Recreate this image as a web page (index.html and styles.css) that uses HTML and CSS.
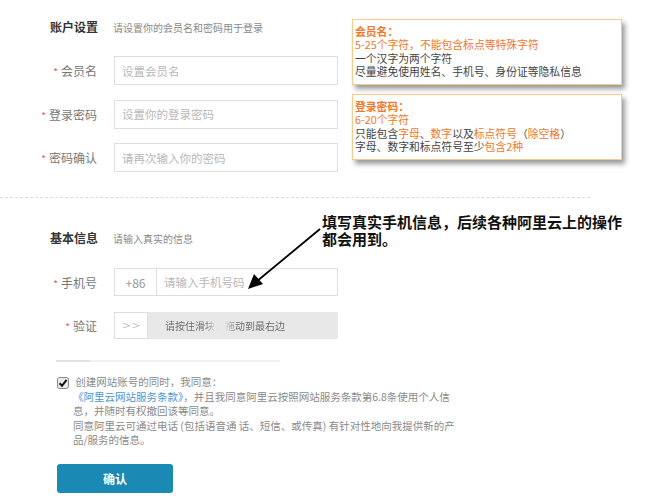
FILE: index.html
```html
<!DOCTYPE html>
<html lang="zh">
<head>
<meta charset="utf-8">
<link rel="stylesheet" href="styles.css">
</head>
<body>
<div class="page">
  <section class="sec sec-account">
    <div class="head"><h2>账户设置</h2><span class="sub">请设置你的会员名和密码用于登录</span></div>
    <div class="rows">
      <div class="row"><label><i>*</i>会员名</label><div class="input">设置会员名</div></div>
      <div class="row"><label><i>*</i>登录密码</label><div class="input">设置你的登录密码</div></div>
      <div class="row"><label><i>*</i>密码确认</label><div class="input">请再次输入你的密码</div></div>
    </div>
    <div class="tip tip-name">
      <b class="or">会员名：</b>
      <span class="or">5-25个字符，不能包含标点等特殊字符</span>
      <span>一个汉字为两个字符</span>
      <span>尽量避免使用姓名、手机号、身份证等隐私信息</span>
    </div>
    <div class="tip tip-pwd">
      <b class="or">登录密码：</b>
      <span class="or">6-20个字符</span>
      <span>只能包含<em>字母</em>、<em>数字</em>以及<em>标点符号</em>（<em>除空格</em>）</span>
      <span>字母、数字和标点符号至少<em>包含2种</em></span>
    </div>
  </section>

  <div class="dots"></div>

  <section class="sec sec-basic">
    <div class="head"><h2>基本信息</h2><span class="sub">请输入真实的信息</span></div>
    <div class="row phone"><label><i>*</i>手机号</label><div class="input split"><span class="code">+86</span><span class="ph">请输入手机号码</span></div></div>
    <div class="row verify"><label><i>*</i>验证</label><div class="slider"><span class="handle">&gt;&gt;</span><span class="slide-text">请按住滑块，拖动到最右边</span></div></div>
    <div class="note">填写真实手机信息，后续各种阿里云上的操作<br>都会用到。</div>
    <svg class="arrow" width="90" height="70" viewBox="0 0 90 70">
      <line x1="78" y1="4" x2="14" y2="57" stroke="#000" stroke-width="1.8"/>
      <polygon points="6,64 12,49 21,59" fill="#000"/>
    </svg>
  </section>

  <div class="rule"><span></span></div>

  <div class="agree">
    <svg class="check" width="12" height="12" viewBox="0 0 12 12">
      <rect x="0.5" y="0.5" width="11" height="11" rx="2" fill="#e9e9e9" stroke="#8a8a8a"/>
      <path d="M2.6 6.2 L5 8.8 L9.6 2.8" fill="none" stroke="#111" stroke-width="2"/>
    </svg>
    <p>&nbsp;创建网站账号的同时，我同意：<br><a>《阿里云网站服务条款》</a>，并且我同意阿里云按照网站服务条款第6.8条使用个人信<br>息，并随时有权撤回该等同意。<br>同意阿里云可通过电话 (包括语音通 话、短信、或传真) 有针对性地向我提供新的产<br>品/服务的信息。</p>
  </div>

  <button class="btn">确认</button>
</div>
</body>
</html>
```

FILE: styles.css
```css
* { box-sizing: border-box; }
html, body { margin: 0; padding: 0; background: #fff; }
body {
  width: 649px;
  height: 500px;
  overflow: hidden;
  font-family: "Noto Sans CJK SC", "Microsoft YaHei", sans-serif;
  color: #666;
}
.page { position: relative; padding-top: 17px; }
.sec { position: relative; }
.head {
  display: flex;
  align-items: center;
  height: 20px;
  padding-left: 50px;
}
.head h2 {
  margin: 0;
  width: 63px;
  font-size: 12px;
  font-weight: bold;
  color: #333;
  line-height: 20px;
}
.head .sub { font-size: 10px; color: #8a8a8a; }
.rows { display: flex; flex-direction: column; gap: 14.5px; margin-top: 19px; }
.row { display: flex; align-items: center; gap: 17px; }
.row label {
  width: 97px;
  text-align: right;
  font-size: 12px;
  color: #777;
}
.row label i { font-style: normal; color: #e0585c; margin-right: 3px; font-size: 10px; }
.input {
  width: 224px;
  height: 29px;
  border: 1px solid #dedede;
  padding-left: 7px;
  font-size: 11.5px;
  color: #b8b8b8;
  display: flex;
  align-items: center;
}
.tip {
  position: absolute;
  left: 352px;
  width: 270px;
  height: 66px;
  border: 1px solid #f6c98c;
  background: #fff;
  box-shadow: 3px 4px 5px rgba(0,0,0,0.4);
  padding: 5px 0 0 2px;
  font-size: 10.8px;
  line-height: 13.4px;
  color: #444;
  display: flex;
  flex-direction: column;
}
.tip-name { top: 2px; }
.tip-pwd { top: 77px; }
.tip .or, .tip em { color: #f0782a; font-style: normal; }
.tip b { font-weight: bold; }
.dots {
  margin-top: 25px;
  width: 590px;
  border-top: 1px dashed #dcdcdc;
}
.sec-basic { padding-top: 30px; }
.phone { margin-top: 20px; }
.phone .input { height: 28px; padding-left: 0; }
.split .code {
  width: 42px;
  height: 100%;
  border-right: 1px solid #dedede;
  display: flex;
  align-items: center;
  justify-content: center;
  color: #999;
  font-size: 12px;
}
.split .ph { padding-left: 7px; }
.verify { margin-top: 16px; }
.slider {
  width: 224px;
  height: 27px;
  background: #e8e8e8;
  display: flex;
  align-items: center;
}
.handle {
  width: 34px;
  height: 27px;
  background: #fff;
  border: 1px solid #dedede;
  display: flex;
  align-items: center;
  justify-content: center;
  color: #999;
  font-family: "DejaVu Sans", sans-serif;
  font-size: 11px;
  font-weight: 300;
}
.slide-text {
  margin-left: 17px;
  font-size: 10px;
  background: linear-gradient(90deg, #666 0%, #666 34%, #e2e2e2 42%, #e2e2e2 50%, #666 60%, #666 100%);
  -webkit-background-clip: text;
  background-clip: text;
  color: transparent;
}
.note {
  position: absolute;
  left: 322px;
  top: 15px;
  font-size: 15px;
  font-weight: bold;
  line-height: 17px;
  color: #111;
  white-space: nowrap;
}
.arrow { position: absolute; left: 242px; top: 27px; }
.rule {
  margin: 21px 0 0 56px;
  width: 224px;
  height: 2px;
  background: #f1f1f1;
}
.rule span { display: block; width: 34px; height: 2px; background: #e2e2e2; }
.agree {
  display: flex;
  align-items: flex-start;
  margin: 13px 0 0 57px;
  gap: 4px;
}
.check { margin-top: 1.5px; flex: none; }
.agree p {
  margin: 0;
  font-size: 10.5px;
  line-height: 14.5px;
  color: #8a8a8a;
  white-space: nowrap;
}
.agree a { color: #4a96d2; }
.btn {
  display: block;
  margin: 16px 0 0 57px;
  width: 116px;
  height: 29px;
  border: none;
  border-radius: 3px;
  background: #1a8ab5;
  color: #fff;
  font-family: inherit;
  font-size: 12px;
  font-weight: bold;
}
```
